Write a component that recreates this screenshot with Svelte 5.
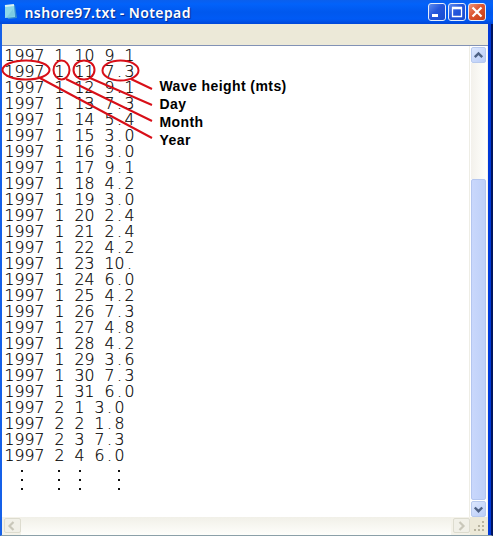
<script>
  const rows = [
    '1997 1 10 9.1', '1997 1 11 7.3', '1997 1 12 9.1', '1997 1 13 7.3', '1997 1 14 5.4',
    '1997 1 15 3.0', '1997 1 16 3.0', '1997 1 17 9.1', '1997 1 18 4.2', '1997 1 19 3.0',
    '1997 1 20 2.4', '1997 1 21 2.4', '1997 1 22 4.2', '1997 1 23 10.', '1997 1 24 6.0',
    '1997 1 25 4.2', '1997 1 26 7.3', '1997 1 27 4.8', '1997 1 28 4.2', '1997 1 29 3.6',
    '1997 1 30 7.3', '1997 1 31 6.0', '1997 2 1 3.0', '1997 2 2 1.8', '1997 2 3 7.3',
    '1997 2 4 6.0'
  ];
  const labels = ['Wave height (mts)', 'Day', 'Month', 'Year'];
  const dotColumns = [21, 58, 79, 118];
  const dotRows = [470, 479, 488];
</script>

<div class="screen">
  <div class="window">
    <header>
      <svg class="file" width="14" height="17" viewBox="0 0 14 17">
        <path d="M2 2 11 1 13 14 4 15Z" fill="#368ed0" />
        <path d="M1 2 10 1 11 13 1 14Z" fill="#8ed8ea" />
        <path d="M1 2 10 1" stroke="#d9f3f3" stroke-width="2" />
        <path d="M3 13 9 5 10.5 12.5Z" fill="#7ccbe2" />
      </svg>
      <h1>nshore97.txt - Notepad</h1>
      <div class="controls">
        <span class="btn"><svg width="16" height="16" viewBox="0 0 16 16"><path d="M3 11.5H9" stroke="#fff" stroke-width="3" /></svg></span>
        <span class="btn"><svg width="16" height="16" viewBox="0 0 16 16"><path d="M3.5 4H12.5V12.5H3.5Z" fill="none" stroke="#fff" stroke-width="1.3" /><path d="M3 4H13" stroke="#fff" stroke-width="2.6" /></svg></span>
        <span class="btn close"><svg width="16" height="16" viewBox="0 0 16 16"><path d="M3.5 3.5 12.5 12.5M12.5 3.5 3.5 12.5" stroke="#fff" stroke-width="2.2" /></svg></span>
      </div>
    </header>
    <div class="body">
      <div class="menubar"></div>
      <div class="main">
        <div class="text">
          {#each rows as row}
            <div class="row">{#each row as ch}<span>{ch}</span>{/each}</div>
          {/each}
        </div>
        <div class="vscroll">
          <span class="sb"><svg width="13" height="15" viewBox="0 0 13 15"><path d="M2.8 9.2 6.5 5.5 10.2 9.2" fill="none" stroke="#4d6185" stroke-width="2.4" /></svg></span>
          <div class="track"></div>
          <div class="thumb"></div>
          <span class="sb"><svg width="13" height="15" viewBox="0 0 13 15"><path d="M2.8 5.5 6.5 9.2 10.2 5.5" fill="none" stroke="#4d6185" stroke-width="2.4" /></svg></span>
        </div>
      </div>
      <div class="hscroll">
        <span class="hb"><svg width="14" height="14" viewBox="0 0 14 14"><path d="M8.5 3 4.5 7 8.5 11" fill="none" stroke="#c9c7ba" stroke-width="2.2" /></svg></span>
        <div class="htrack"></div>
        <span class="hb"><svg width="14" height="14" viewBox="0 0 14 14"><path d="M5.5 3 9.5 7 5.5 11" fill="none" stroke="#c9c7ba" stroke-width="2.2" /></svg></span>
        <svg class="grip" width="18" height="18" viewBox="0 0 18 18" fill="#b8b49f">
          <path d="M12 4h2v2h-2zM8 8h2v2h-2zM12 8h2v2h-2zM4 12h2v2h-2zM8 12h2v2h-2zM12 12h2v2h-2z" />
        </svg>
      </div>
    </div>
  </div>

  <svg class="marks" width="495" height="536" viewBox="0 0 495 536">
    <g fill="none" stroke="#d80f18" stroke-width="2">
      <ellipse cx="26" cy="70" rx="23.5" ry="9.5" />
      <ellipse cx="61.5" cy="70" rx="8" ry="9.5" />
      <ellipse cx="84" cy="70" rx="10.5" ry="9.5" />
      <ellipse cx="120.5" cy="70.5" rx="18" ry="10" />
      <path d="M131 79 152 89M90 78 152 105M66 79 152 121M38 77 152 138" />
    </g>
    {#each dotRows as y}
      {#each dotColumns as x}<rect {x} {y} width="2" height="2" fill="#111" />{/each}
    {/each}
  </svg>
  <div class="labels">
    {#each labels as label}<div>{label}</div>{/each}
  </div>
</div>

<style>
  .screen { position: relative; width: 495px; height: 536px; background: #fff; overflow: hidden; }
  .window { width: 493px; height: 536px; display: flex; flex-direction: column; }
  header {
    height: 24px; flex: none; display: flex; align-items: center; box-sizing: border-box;
    padding: 0 7px 0 4px;
    background: linear-gradient(#0a5fee 0, #0262fa 4px, #0058ee 12px, #005af5 19px, #0047d8 24px);
  }
  .file { flex: none; }
  h1 {
    flex: 1; margin: 1px 0 0 6.5px; color: #fff; white-space: nowrap;
    font: 600 14px/24px "Noto Sans", "Open Sans", sans-serif; letter-spacing: 0.4px;
    text-shadow: 1px 1px 1px #0a2b8c;
  }
  .controls { display: flex; gap: 2px; }
  .btn {
    width: 16px; height: 16px; border: 1px solid #e5ecfa; border-radius: 3px; display: flex;
    background: linear-gradient(135deg, #5f8cee, #2456dc 45%, #174bd0);
  }
  .close { background: linear-gradient(135deg, #ee9478, #dc5530 45%, #c63d14); }
  .body {
    flex: 1; display: flex; flex-direction: column; box-sizing: border-box;
    border-left: 2px solid #1560e8; border-bottom: 1px solid #8ba0a8;
    border-right: 2px solid #001560; box-shadow: inset -3px 0 #0038d8;
    padding-right: 3px;
  }
  .menubar { height: 22px; background: #ece9d8; border-bottom: 1px solid #8292b5; box-sizing: border-box; flex: none; }
  .main { height: 471px; display: flex; border-right: 1px solid #f4f2e9; }
  .text { flex: 1; padding: 2px 0 0 2.5px; }
  .row { height: 16px; display: flex; font: 200 15.7px/16px "DejaVu Sans Light", "DejaVu Sans", sans-serif; color: #000; -webkit-text-stroke: 0.2px #000; }
  .row span { width: 10px; flex: none; text-align: center; white-space: pre; }
  .vscroll {
    width: 18px; box-sizing: border-box; display: flex; flex-direction: column; padding: 1px 1px 0;
    background: #fff; border-left: 1px solid #eeede5;
  }
  .sb {
    height: 14px; width: 13px; flex: none; border: 1px solid #b7c9ee; border-radius: 2px; display: flex;
    background: linear-gradient(135deg, #dce7fe, #b9ccf7);
  }
  .track { height: 116px; background: linear-gradient(90deg, #f3f1ec, #fefefb); }
  .thumb { flex: 1; width: 13px; margin-bottom: 1px; border: 1px solid #b4c6ef; border-radius: 2px; background: linear-gradient(90deg, #c9d7fc, #bed0f8); }
  .hscroll { flex: 1; display: flex; background: #f4f2e9; box-sizing: border-box; }
  .hb {
    width: 15px; height: 13px; margin: 1px 0 1px 2px; border: 1px solid #dddccf; border-radius: 2px;
    display: flex; flex: none; background: #f1f0e8;
  }
  .htrack { flex: 1; background: linear-gradient(#f1f0e8, #fefefb); }
  .grip { background: #ece9d8; }
  .marks { position: absolute; left: 0; top: 0; }
  .labels {
    position: absolute; left: 159.5px; top: 77px; white-space: nowrap;
    font: 700 14px/18px "Liberation Sans", Arial, sans-serif; color: #000; letter-spacing: 0.42px;
  }
</style>
